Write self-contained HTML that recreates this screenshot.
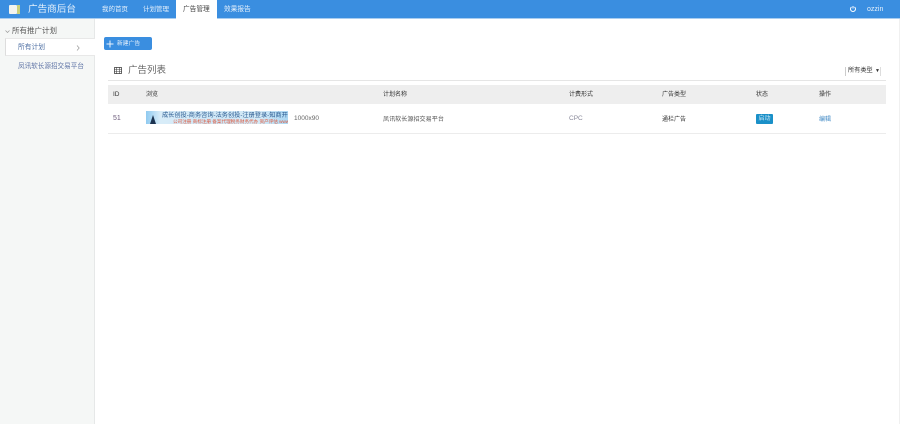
<!DOCTYPE html>
<html><head><meta charset="utf-8">
<style>
html,body{margin:0;padding:0;width:900px;height:424px;overflow:hidden;background:#fff}
body{position:relative;font-family:"Liberation Sans","Noto Sans CJK SC",sans-serif;font-size:6px;color:#555}
#w{position:absolute;left:0;top:0;width:900px;height:424px;filter:blur(.3px)}
.a{position:absolute;white-space:nowrap;line-height:10px}
</style></head><body><div id="w">
<div class="a" style="left:0;top:0;width:900px;height:18px;background:#3a8ee0"></div>
<div class="a" style="left:0;top:18px;width:900px;height:1px;background:#a9cdf0"></div>
<div class="a" style="left:9px;top:5px;width:8px;height:9px;background:#f2f4ef;border-radius:1px"></div>
<div class="a" style="left:17px;top:5px;width:3px;height:9px;background:#c9cf7a"></div>
<div class="a" style="left:28px;top:4px;font-size:9.6px;line-height:12px;color:#e4f0fb">广告商后台</div>
<div class="a" style="left:102px;top:5px;font-size:6.5px;color:#e6f1fc">我的首页</div>
<div class="a" style="left:143px;top:5px;font-size:6.5px;color:#e6f1fc">计划管理</div>
<div class="a" style="left:176px;top:0;width:41px;height:19px;background:#fff"></div>
<div class="a" style="left:183px;top:5px;font-size:6.7px;color:#444">广告管理</div>
<div class="a" style="left:224px;top:5px;font-size:6.7px;color:#e6f1fc">效果报告</div>
<svg class="a" style="left:849px;top:5px" width="8" height="8" viewBox="0 0 8 8"><path d="M2.5 2A2.5 2.5 0 1 0 5.5 2M4 1V3.5" fill="none" stroke="#fff" stroke-width="1"/></svg>
<div class="a" style="left:867px;top:5px;font-size:7px;color:#e6f1fc">ozzin</div>

<div class="a" style="left:0;top:19px;width:94px;height:405px;background:#f5f7f6;border-right:1px solid #e6e8e8"></div>
<svg class="a" style="left:5px;top:29px" width="5" height="5" viewBox="0 0 5 5"><path d="M.5 1.5L2.5 3.5L4.5 1.5" fill="none" stroke="#999" stroke-width=".7"/></svg>
<div class="a" style="left:12px;top:26px;font-size:7.5px;color:#555">所有推广计划</div>
<div class="a" style="left:5px;top:38px;width:90px;height:18px;background:#fff;border-left:1px solid #ddd;border-top:1px solid #e8e8e8;border-bottom:1px solid #e8e8e8;box-sizing:border-box"></div>
<div class="a" style="left:18px;top:43px;font-size:6.75px;color:#4f70a4">所有计划</div>
<svg class="a" style="left:76px;top:45px" width="4" height="6" viewBox="0 0 4 6"><path d="M1 .5L3.2 3L1 5.5" fill="none" stroke="#999" stroke-width=".7"/></svg>
<div class="a" style="left:18px;top:62px;font-size:6.6px;color:#5f74a6">凤讯软长源招交易平台</div>

<div class="a" style="left:104px;top:37px;width:48px;height:13px;background:#3a8ee0;border-radius:2px"></div>
<svg class="a" style="left:106px;top:40px" width="8" height="8" viewBox="0 0 8 8"><path d="M4 .5V7.5M.5 4H7.5" stroke="#eaf3fc" stroke-width="1"/></svg>
<div class="a" style="left:117px;top:39px;font-size:5.8px;color:#e6f1fc">新建广告</div>

<svg class="a" style="left:114px;top:67px" width="8" height="7" viewBox="0 0 8 7"><rect x=".5" y=".5" width="7" height="6" fill="none" stroke="#444" stroke-width=".8"/><path d="M0 2.5H8M0 4.5H8M2.7 0V7M5.3 0V7" stroke="#444" stroke-width=".6"/></svg>
<div class="a" style="left:128px;top:65px;font-size:9.5px;line-height:12px;color:#666">广告列表</div>
<div class="a" style="left:845px;top:67px;width:36px;height:9px;border-left:1px solid #ccc;border-right:1px solid #ddd;box-sizing:border-box"></div>
<div class="a" style="left:848px;top:66px;font-size:6.2px;color:#333">所有类型</div>
<div class="a" style="left:875px;top:66px;font-size:5px;color:#333">▼</div>
<div class="a" style="left:108px;top:80px;width:778px;height:1px;background:#e5e5e5"></div>
<div class="a" style="left:108px;top:85px;width:778px;height:19px;background:#eee"></div>

<div class="a" style="left:113px;top:90px;font-size:6.5px;color:#333">ID</div>
<div class="a" style="left:146px;top:90px;color:#333">浏览</div>
<div class="a" style="left:383px;top:90px;color:#333">计划名称</div>
<div class="a" style="left:569px;top:90px;color:#333">计费形式</div>
<div class="a" style="left:662px;top:90px;color:#333">广告类型</div>
<div class="a" style="left:756px;top:90px;color:#333">状态</div>
<div class="a" style="left:819px;top:90px;color:#333">操作</div>

<div class="a" style="left:113px;top:114px;font-size:7px;color:#6b5a7a">51</div>
<div class="a" style="left:146px;top:111px;width:142px;height:13px;background:linear-gradient(90deg,#8fcaf0,#d8ecf8 10%,#cfe7f6 50%,#d4eaf7 80%,#a9d6f2 100%);overflow:hidden">
<div class="a" style="left:4px;top:4px;width:0;height:0;border-left:3px solid transparent;border-right:3px solid transparent;border-bottom:9px solid #1c3350"></div>
<div class="a" style="left:16px;top:1px;font-size:6.2px;line-height:7px;color:#2a5a90">成长创投-商务咨询-法务创投-注册登录-知商开店</div>
<div class="a" style="left:27px;top:8px;font-size:4.6px;line-height:5px;color:#e0583c">公司注册 商标注册 备案代理税务财务代办 资产评估 www.xxxx.com</div>
</div>
<div class="a" style="left:294px;top:114px;font-size:6.5px;color:#666">1000x90</div>
<div class="a" style="left:383px;top:115px;font-size:6.1px;color:#555">凤讯软长源招交易平台</div>
<div class="a" style="left:569px;top:114px;font-size:6.5px;color:#889">CPC</div>
<div class="a" style="left:662px;top:115px;color:#333">通栏广告</div>
<div class="a" style="left:756px;top:114px;width:17px;height:10px;line-height:10px;background:#1a90c8;color:#cfe8f5;text-align:center;border-radius:1px;font-size:6px">启动</div>
<div class="a" style="left:819px;top:115px;color:#3f88c4">编辑</div>
<div class="a" style="left:108px;top:133px;width:778px;height:1px;background:#ececec"></div>
<div class="a" style="left:899px;top:19px;width:1px;height:405px;background:#f0f0f0"></div>
</div></body></html>
